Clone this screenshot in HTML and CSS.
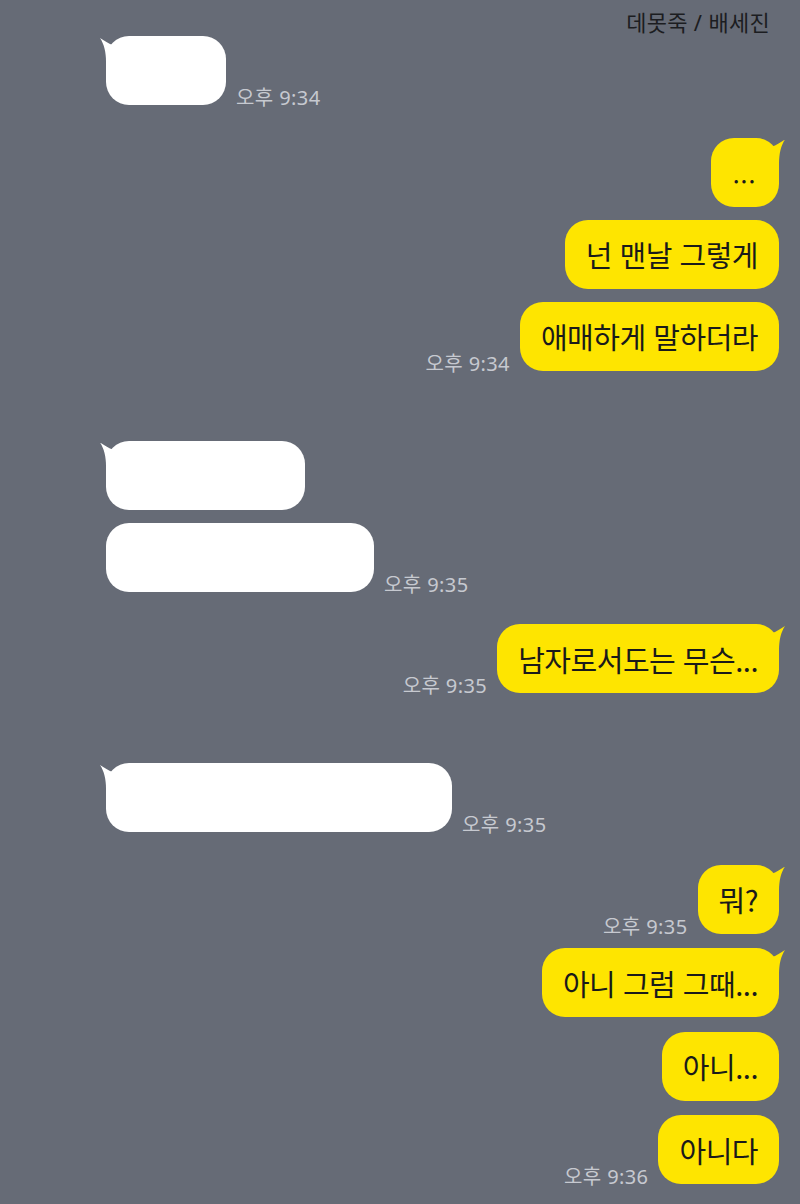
FILE: index.html
```html
<!DOCTYPE html>
<html lang="ko">
<head>
    <meta charset="UTF-8">
    <meta name="viewport" content="width=device-width, initial-scale=1.0">
    <title>데못죽 / 배세진</title>
    <link rel="stylesheet" href="styles.css">
</head>
<body>
    <div class="chat-screen">
        <div class="chat-title">데못죽 / 배세진</div>

        <div class="chat-log">
            <!-- 상대방 -->
            <div class="row theirs first">
                <div class="bubble tail blank blank-xs"></div>
                <span class="time">오후 9:34</span>
            </div>

            <!-- 나 -->
            <div class="row mine group">
                <div class="bubble tail dots">...</div>
            </div>
            <div class="row mine">
                <div class="bubble">넌 맨날 그렇게</div>
            </div>
            <div class="row mine">
                <span class="time">오후 9:34</span>
                <div class="bubble">애매하게 말하더라</div>
            </div>

            <div class="row theirs far">
                <div class="bubble tail blank blank-sm"></div>
            </div>
            <div class="row theirs">
                <div class="bubble blank blank-md"></div>
                <span class="time">오후 9:35</span>
            </div>

            <div class="row mine group">
                <span class="time">오후 9:35</span>
                <div class="bubble tail">남자로서도는 무슨...</div>
            </div>

            <div class="row theirs far">
                <div class="bubble tail blank blank-lg"></div>
                <span class="time">오후 9:35</span>
            </div>

            <div class="row mine group">
                <span class="time">오후 9:35</span>
                <div class="bubble tail">뭐?</div>
            </div>
            <div class="row mine near">
                <div class="bubble tail">아니 그럼 그때...</div>
            </div>
            <div class="row mine near">
                <div class="bubble">아니...</div>
            </div>
            <div class="row mine near">
                <span class="time">오후 9:36</span>
                <div class="bubble">아니다</div>
            </div>
        </div>
    </div>
</body>
</html>
```

FILE: styles.css
```css
body {
    margin: 0;
    padding: 0;
    background-color: #666b76;
    font-family: "Noto Sans", "Noto Sans CJK KR", sans-serif;
}

.chat-screen {
    width: 800px;
    height: 1204px;
    overflow: hidden;
}

/* 상단 제목 */
.chat-title {
    text-align: right;
    padding: 8px 30px 0 0;
    height: 28px;
    line-height: 28px;
    font-size: 22px;
    color: #1c1d21;
    letter-spacing: 0.3px;
}

.chat-log {
    display: flex;
    flex-direction: column;
    padding: 0 21px 0 106px;
}

/* 말풍선 한 줄 */
.row {
    display: flex;
    align-items: flex-end;
    gap: 10px;
    margin-top: 13px;
}

.row.mine {
    justify-content: flex-end;
}

.row.first {
    margin-top: 0;
}

.row.group {
    margin-top: 32.5px;
}

.row.far {
    margin-top: 70px;
}

.row.near {
    margin-top: 14.5px;
}

.bubble {
    position: relative;
    box-sizing: border-box;
    height: 69px;
    padding: 0 21px;
    border-radius: 23px;
    display: flex;
    align-items: center;
    font-family: "Noto Sans CJK KR", sans-serif;
    font-size: 29px;
    letter-spacing: -0.5px;
    color: #1a1a1a;
    white-space: nowrap;
}

.mine .bubble {
    background-color: #fee500;
}

.theirs .bubble {
    background-color: #ffffff;
}

/* 꼬리 */
.bubble.tail::before {
    content: "";
    position: absolute;
    top: 2px;
    width: 22px;
    height: 24px;
    background-color: inherit;
    clip-path: path('M0 0 C5 3 9 6 13 7 L22 7 L22 24 L6 24 C6 14 4 6 0 0 Z');
}

.theirs .bubble.tail::before {
    left: -6px;
}

.mine .bubble.tail::before {
    right: -6px;
    transform: scaleX(-1);
}

.bubble.dots {
    width: 68px;
    justify-content: center;
    padding: 6px 0 0;
    font-size: 18px;
    letter-spacing: 2px;
    font-weight: bold;
}

/* 가린 메시지 */
.blank-xs { width: 120px; }
.blank-sm { width: 199px; }
.blank-md { width: 268px; }
.blank-lg { width: 346px; }

.time {
    font-size: 20px;
    line-height: 1;
    color: #c6c9d0;
    letter-spacing: 0.4px;
    margin-bottom: -3px;
    white-space: nowrap;
}
```
